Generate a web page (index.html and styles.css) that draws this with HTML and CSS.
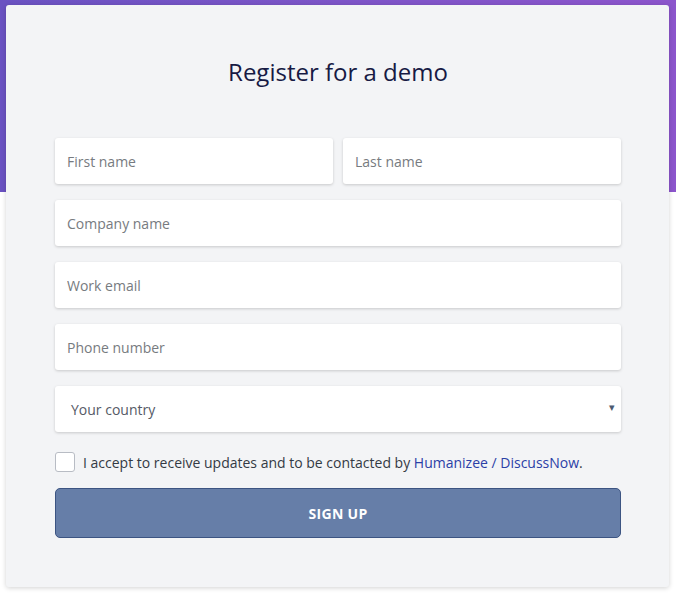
FILE: index.html
```html
<!DOCTYPE html>
<html lang="en">
<head>
<meta charset="utf-8">
<title>Register for a demo</title>
<link rel="stylesheet" href="styles.css">
</head>
<body>
<main class="card">
  <h1 class="title">Register for a demo</h1>
  <form class="form">
    <div class="row-two">
      <input class="field" type="text" placeholder="First name">
      <input class="field" type="text" placeholder="Last name">
    </div>
    <input class="field" type="text" placeholder="Company name">
    <input class="field" type="email" placeholder="Work email">
    <input class="field" type="tel" placeholder="Phone number">
    <div class="select-wrap">
      <span class="select-text">Your country</span>
      <span class="select-arrow">▾</span>
    </div>
    <label class="consent">
      <span class="checkbox"></span>
      <span class="consent-text">I accept to receive updates and to be contacted by <a class="link" href="#">Humanizee / DiscussNow</a>.</span>
    </label>
    <button class="submit" type="button">SIGN UP</button>
  </form>
</main>
</body>
</html>
```

FILE: styles.css
```css
html, body {
  margin: 0;
  padding: 0;
}
body {
  width: 676px;
  height: 594px;
  overflow: hidden;
  font-family: "Open Sans", "Noto Sans", sans-serif;
  background: #ffffff linear-gradient(to right, #6a52c2, #7d55c8 50%, #8c55cc) no-repeat;
  background-size: 100% 192px;
  padding-top: 5px;
  box-sizing: border-box;
}
.card {
  margin-left: 6px;
  width: 663px;
  height: 582px;
  box-sizing: border-box;
  background: #f3f4f6;
  border-radius: 3px;
  box-shadow: 0 1px 5px rgba(0, 0, 0, 0.18);
  padding: 46px 48px 0 49px;
}
.title {
  margin: 0;
  font-size: 24px;
  line-height: 42px;
  font-weight: 400;
  color: #171a44;
  text-align: center;
}
.form {
  margin-top: 45px;
  display: flex;
  flex-direction: column;
  gap: 16px;
}
.row-two {
  display: grid;
  grid-template-columns: 1fr 1fr;
  gap: 10px;
}
.field, .select-wrap {
  height: 46px;
  box-sizing: border-box;
  border: none;
  border-radius: 3px;
  background: #ffffff;
  box-shadow: 0 1px 3px rgba(0, 0, 0, 0.18);
  font-family: "Open Sans", "Noto Sans", sans-serif;
  font-size: 14px;
  color: #333;
  padding: 0 12px;
  width: 100%;
  outline: none;
}
.field::placeholder {
  color: #777b80;
}
.select-wrap {
  display: flex;
  align-items: center;
  justify-content: space-between;
  padding: 0 6px 0 16px;
}
.select-text {
  color: #555a66;
  font-size: 14px;
}
.select-arrow {
  color: #4d5a70;
  font-size: 11px;
  margin-top: -5px;
}
.consent {
  display: flex;
  align-items: center;
  gap: 8px;
  margin-top: 4px;
  font-size: 14px;
  color: #333a44;
}
.checkbox {
  width: 20px;
  height: 20px;
  box-sizing: border-box;
  border: 1px solid #b8bcc4;
  border-radius: 3px;
  background: #ffffff;
  flex: none;
}
.link {
  color: #2b40a6;
  text-decoration: none;
}
.submit {
  height: 50px;
  width: 100%;
  border: 1px solid #3c5482;
  border-radius: 5px;
  background: #667ea8;
  color: #ffffff;
  font-family: "Open Sans", "Noto Sans", sans-serif;
  font-size: 14px;
  font-weight: 700;
  letter-spacing: 0.3px;
}
```
